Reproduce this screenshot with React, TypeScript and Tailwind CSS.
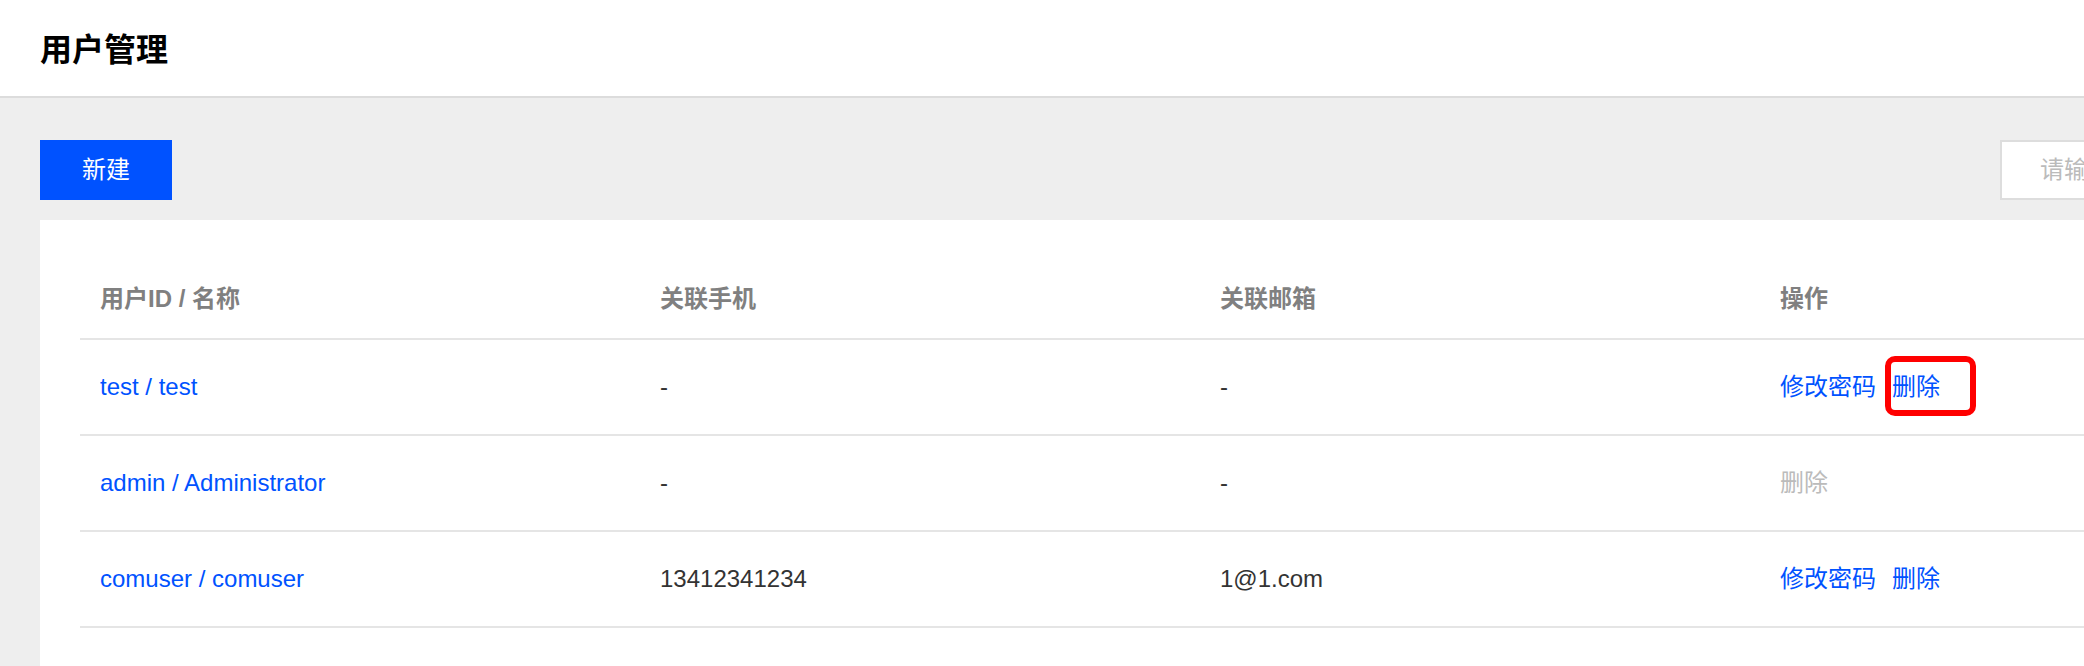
import React from 'react';

type Row = {
  name: string;
  phone: string;
  email: string;
  canEdit: boolean;
  highlight?: boolean;
};

const rows: Row[] = [
  { name: 'test / test', phone: '-', email: '-', canEdit: true, highlight: true },
  { name: 'admin / Administrator', phone: '-', email: '-', canEdit: false },
  { name: 'comuser / comuser', phone: '13412341234', email: '1@1.com', canEdit: true },
];

const font = "font-['Liberation_Sans','Noto_Sans_CJK_SC',sans-serif]";

const App: React.FC = () => {
  return (
    <div className={`w-[2084px] h-[666px] overflow-hidden bg-[#eeeeee] ${font}`}>
      <div className="w-[2400px]">
        {/* Header */}
        <header className="h-[98px] bg-white border-b-2 border-[#dcdcdc] flex items-center px-10 pt-1">
          <h1 className="text-[32px] leading-[40px] font-semibold text-black">用户管理</h1>
        </header>

        {/* Content */}
        <div className="px-10 pt-[42px]">
          <div className="flex justify-between items-center h-[60px]">
            <button className="w-[132px] h-[60px] bg-[#0052ff] text-white text-[24px] leading-none">
              新建
            </button>
            <div className="w-[360px] h-[60px] border-2 border-[#dddddd] bg-white flex items-center pl-[38px] text-[24px] text-[#bbbbbb]">
              请输入用户ID / 名称
            </div>
          </div>

          <div className="mt-5 bg-white px-10 pt-10 pb-10 h-[600px]">
            {/* Table header */}
            <div className="grid grid-cols-[560px_560px_560px_560px] h-[80px] items-center border-b-2 border-[#e5e5e5] text-[24px] font-semibold text-[#808080]">
              <div className="pl-5">用户ID / 名称</div>
              <div className="pl-5">关联手机</div>
              <div className="pl-5">关联邮箱</div>
              <div className="pl-5">操作</div>
            </div>

            {rows.map((r) => (
              <div
                key={r.name}
                className="grid grid-cols-[560px_560px_560px_560px] h-[96px] items-center border-b-2 border-[#e5e5e5] text-[24px] leading-[32px] text-[#333333]"
              >
                <div className="pl-5 text-[#0052ff]">{r.name}</div>
                <div className="pl-5">{r.phone}</div>
                <div className="pl-5">{r.email}</div>
                <div className="pl-5 flex items-center gap-4">
                  {r.canEdit ? (
                    <>
                      <span className="text-[#0052ff]">修改密码</span>
                      <span className="relative text-[#0052ff]">
                        删除
                        {r.highlight && (
                          <span className="absolute -left-[7px] -top-[15px] w-[91px] h-[60px] border-[6px] border-[#ff0000] rounded-[10px]" />
                        )}
                      </span>
                    </>
                  ) : (
                    <span className="text-[#bbbbbb]">删除</span>
                  )}
                </div>
              </div>
            ))}
          </div>
        </div>
      </div>
    </div>
  );
};

export default App;
